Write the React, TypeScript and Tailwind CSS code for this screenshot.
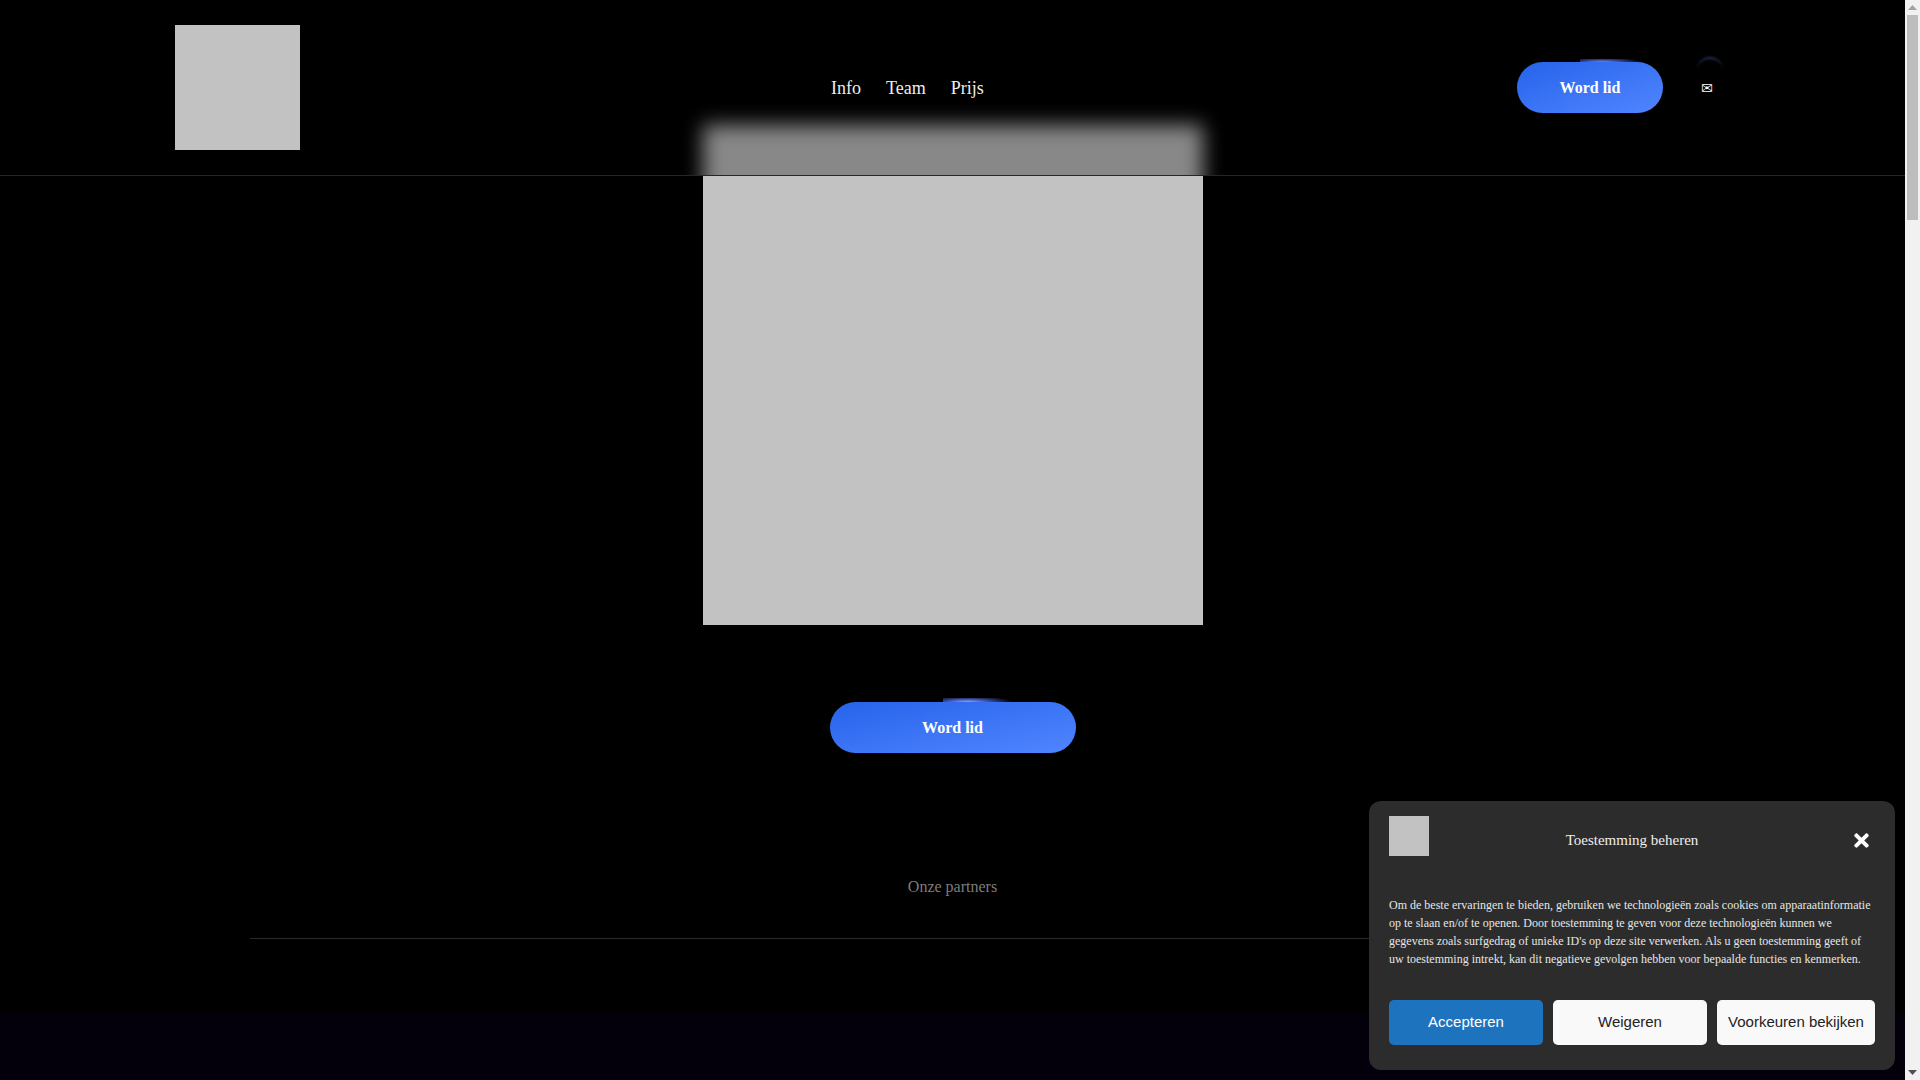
import React from 'react';
import { FaTimes } from 'react-icons/fa';

const serif = "font-['Liberation_Serif',serif]";

const JoinButton: React.FC<{ width: string; glow: string }> = ({ width, glow }) => (
  <a className={`relative flex h-[51px] items-center justify-center ${width}`}>
    <span className={`absolute h-[10px] ${glow}`} />
    <span className="relative flex h-full w-full items-center justify-center rounded-full bg-gradient-to-br from-[#2563eb] to-[#5085ff] text-base font-bold text-white">
      Word lid
    </span>
  </a>
);

const ConsentBanner = () => (
  <div className="absolute bottom-[10px] right-[25px] flex h-[269px] w-[526px] flex-col rounded-xl bg-[#2c2c2c] px-5 pt-[15px] text-[#e6e6e6]">
    <div className="flex h-12 shrink-0">
      <div className="h-10 w-10 bg-[#c2c2c2]" />
      <div className="flex flex-1 items-center justify-center text-[15px] text-[#eeeeee]">Toestemming beheren</div>
      <div className="flex w-10 items-center justify-end pr-[3px] text-white">
        <FaTimes size={21} />
      </div>
    </div>
    <p className="mt-8 text-xs leading-[18px]">
      Om de beste ervaringen te bieden, gebruiken we technologieën zoals cookies om apparaatinformatie op te slaan en/of te openen. Door toestemming te geven voor deze technologieën kunnen we gegevens zoals surfgedrag of unieke ID's op deze site verwerken. Als u geen toestemming geeft of uw toestemming intrekt, kan dit negatieve gevolgen hebben voor bepaalde functies en kenmerken.
    </p>
    <div className="mt-8 flex gap-[10px] font-['Liberation_Sans',sans-serif] text-[15px]">
      <button className="h-[45px] w-[154px] rounded-[5px] bg-[#1e73be] text-white">Accepteren</button>
      <button className="h-[45px] w-[154px] rounded-[5px] bg-[#f9f9f9] text-[#222222]">Weigeren</button>
      <button className="h-[45px] w-[158px] rounded-[5px] bg-[#f9f9f9] text-[#222222]">Voorkeuren bekijken</button>
    </div>
  </div>
);

const Scrollbar = () => (
  <div className="flex h-full w-[15px] shrink-0 flex-col bg-[#f1f1f1]">
    <div className="flex h-[15px] items-center justify-center">
      <svg width="9" height="5" viewBox="0 0 9 5"><path d="M4.5 0L9 5H0z" fill="#a3a3a3" /></svg>
    </div>
    <div className="mx-[2px] h-[205px] bg-[#bdbdbd]" />
    <div className="flex-1" />
    <div className="flex h-[15px] items-center justify-center">
      <svg width="9" height="5" viewBox="0 0 9 5"><path d="M0 0H9L4.5 5z" fill="#505050" /></svg>
    </div>
  </div>
);

export default function App() {
  return (
    <div className={`relative flex h-screen w-full overflow-hidden bg-black ${serif}`}>
      <div className="flex min-w-0 flex-1 flex-col">
        {/* Header */}
        <header className="relative flex h-[176px] shrink-0 items-center border-b border-[#262626] pl-[175px]">
          <div className="absolute left-[665px] top-[90px] h-[85px] w-[576px] overflow-hidden">
            <div className="absolute left-[38px] top-[35px] h-[200px] w-[500px] bg-[#c2c2c2] opacity-70 blur-[10px]" />
          </div>
          <div className="relative h-[125px] w-[125px] bg-[#c2c2c2]" />
          <nav className="relative ml-[531px] flex w-[686px] gap-[25px] text-lg text-[#eeeeee]">
            <a>Info</a>
            <a>Team</a>
            <a>Prijs</a>
          </nav>
          <JoinButton
            width="w-[146px]"
            glow="left-[63px] top-[-3px] w-[63px] bg-[radial-gradient(ellipse_at_35%_40%,#8ea4ff_0%,#3a4aa0_35%,transparent_70%)]"
          />
          <div className="relative ml-[38px] flex h-[51px] items-center">
            <span className="absolute left-[-4px] top-[-5px] h-[26px] w-[26px] rounded-full border-t-2 border-[#26305c] blur-[1px]" />
            <span className="relative text-[14px] leading-none text-white font-['DejaVu_Sans',sans-serif]">✉</span>
          </div>
        </header>

        {/* Hero */}
        <main className="flex flex-1 flex-col items-center">
          <div className="h-[449px] w-[500px] shrink-0 bg-[#c2c2c2]" />
          <div className="mt-[77px]">
            <JoinButton
              width="w-[246px]"
              glow="left-[113px] top-[-4px] w-[70px] bg-[radial-gradient(ellipse_at_35%_40%,#8ea4ff_0%,#3a4aa0_35%,transparent_70%)]"
            />
          </div>
          <p className="mt-[125px] text-base leading-[18px] text-[#7d7d7d]">Onze partners</p>
          <div className="mt-[42px] h-px w-[1405px] shrink-0 bg-[#2a2a2a]" />
          <div className="mt-[74px] w-full flex-1 bg-[#03000b]" />
        </main>
      </div>
      <Scrollbar />
      <ConsentBanner />
    </div>
  );
}
